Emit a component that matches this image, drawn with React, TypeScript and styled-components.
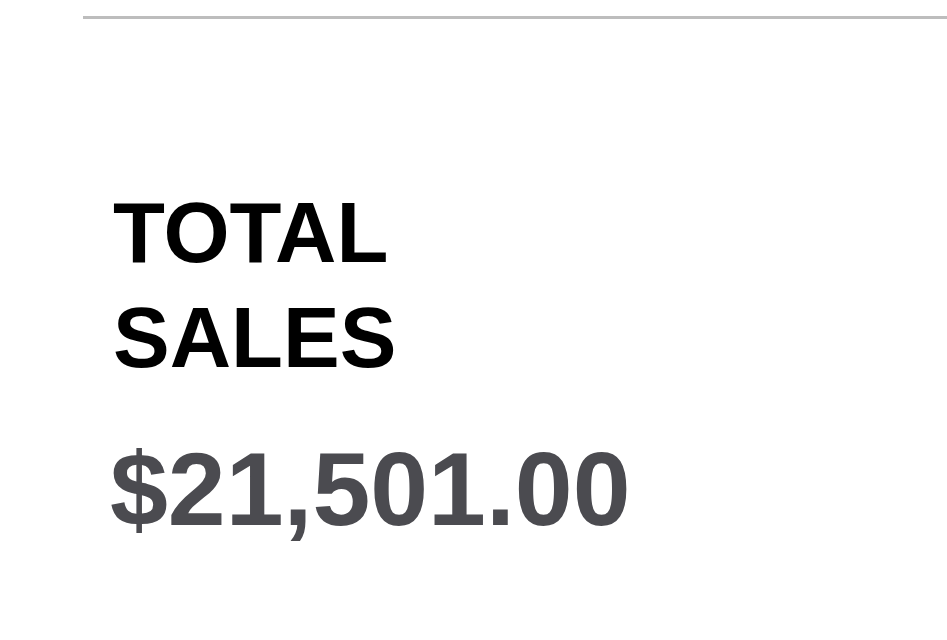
import React from 'react';
import styled, { createGlobalStyle } from 'styled-components';

const GlobalStyle = createGlobalStyle`
  html, body {
    margin: 0;
    padding: 0;
    background: #fff;
  }
  body {
    font-family: "Liberation Sans", Arial, sans-serif;
  }
`;

const Page = styled.div`
  width: 947px;
  height: 640px;
  overflow: hidden;
  padding: 16px 0 0 83px;
  box-sizing: border-box;
`;

const Rule = styled.div`
  height: 3px;
  background-color: #bdbdbd;
`;

const Card = styled.section`
  margin-top: 161px;
  padding-left: 27px;
  display: flex;
  flex-direction: column;
`;

const Label = styled.h2`
  margin: 0 0 0 3px;
  width: 320px;
  font-size: 85px;
  line-height: 105px;
  font-weight: 700;
  color: #000;
  text-transform: uppercase;
`;

const Amount = styled.div`
  margin-top: 37px;
  font-size: 104px;
  line-height: 124px;
  font-weight: 700;
  color: #4b4b50;
`;

export default function App() {
  return (
    <>
      <GlobalStyle />
      <Page>
        <Rule />
        <Card>
          <Label>Total Sales</Label>
          <Amount>$21,501.00</Amount>
        </Card>
      </Page>
    </>
  );
}
